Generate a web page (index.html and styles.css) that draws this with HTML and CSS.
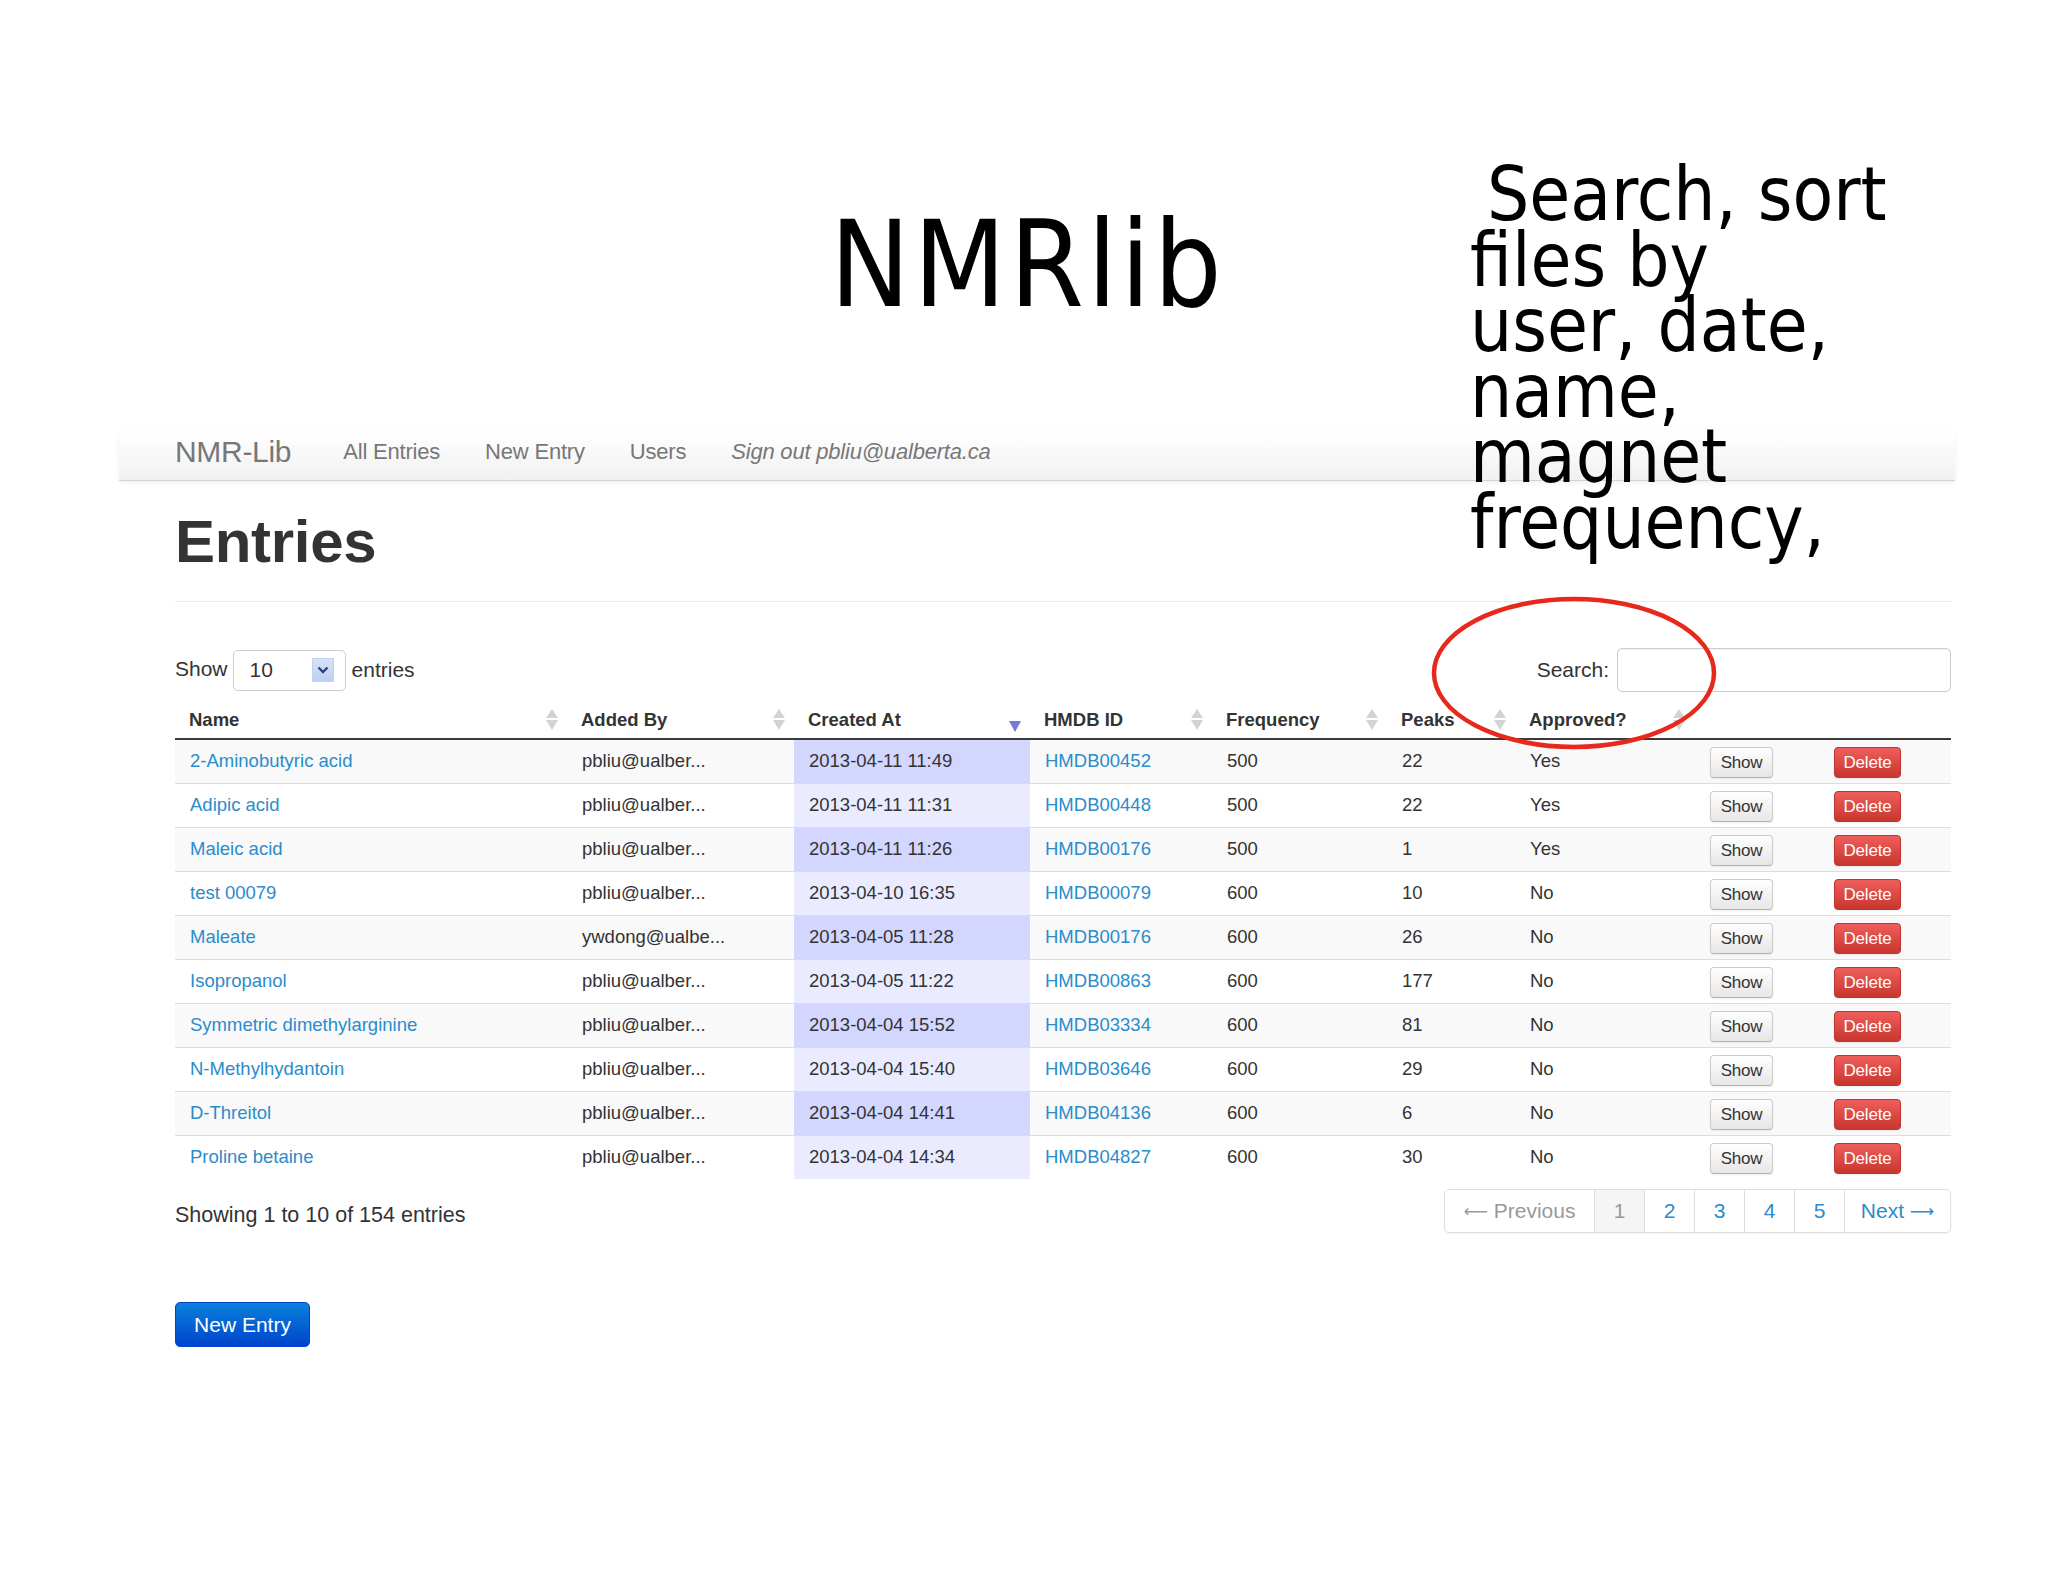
FILE: index.html
```html
<!DOCTYPE html>
<html lang="en">
<head>
<meta charset="utf-8">
<title>NMRlib</title>
<link rel="stylesheet" href="styles.css">
</head>
<body>
<div class="slide">
  <header class="slide-head">
    <h1 class="slide-title">NMRlib</h1>
  </header>

  <div class="note">
    <div class="note-first">Search, sort</div>
    <div>files by</div>
    <div>user, date,</div>
    <div>name,</div>
    <div>magnet</div>
    <div>frequency,</div>
  </div>

  <svg class="circle" width="300" height="170" viewBox="0 0 300 170">
    <ellipse cx="150" cy="85" rx="140" ry="74" fill="none" stroke="#e8281c" stroke-width="4.5"/>
  </svg>

  <nav class="navbar">
    <span class="brand">NMR-Lib</span>
    <span class="nav-link">All Entries</span>
    <span class="nav-link">New Entry</span>
    <span class="nav-link">Users</span>
    <span class="nav-link signout">Sign out pbliu@ualberta.ca</span>
  </nav>

  <main class="container">
    <h2 class="page-title">Entries</h2>
    <hr class="divider">

    <div class="controls">
      <div class="length">
        <span>Show</span>
        <span class="select">
          <span class="select-val">10</span>
          <span class="select-arrow">
            <svg width="12" height="8" viewBox="0 0 12 8"><path d="M1.5 1.5 L6 6 L10.5 1.5" fill="none" stroke="#2c3f7a" stroke-width="2.4"/></svg>
          </span>
        </span>
        <span>entries</span>
      </div>
      <div class="search">
        <span>Search:</span>
        <span class="search-input"></span>
      </div>
    </div>

    <table class="entries">
      <colgroup>
        <col class="c-name"><col class="c-added"><col class="c-created"><col class="c-hmdb"><col class="c-freq"><col class="c-peaks"><col class="c-appr"><col class="c-show"><col class="c-del">
      </colgroup>
      <thead>
        <tr>
          <th><span class="th-in">Name<i class="sort"></i></span></th>
          <th><span class="th-in">Added By<i class="sort"></i></span></th>
          <th><span class="th-in">Created At<i class="sort-desc"></i></span></th>
          <th><span class="th-in">HMDB ID<i class="sort"></i></span></th>
          <th><span class="th-in">Frequency<i class="sort"></i></span></th>
          <th><span class="th-in">Peaks<i class="sort"></i></span></th>
          <th><span class="th-in">Approved?<i class="sort"></i></span></th>
          <th></th>
          <th></th>
        </tr>
      </thead>
      <tbody>
        <tr><td><a>2-Aminobutyric acid</a></td><td>pbliu@ualber...</td><td class="hl">2013-04-11 11:49</td><td><a>HMDB00452</a></td><td>500</td><td>22</td><td>Yes</td><td class="btn-cell"><span class="btn">Show</span></td><td class="btn-cell del-cell"><span class="btn btn-danger">Delete</span></td></tr>
        <tr><td><a>Adipic acid</a></td><td>pbliu@ualber...</td><td class="hl">2013-04-11 11:31</td><td><a>HMDB00448</a></td><td>500</td><td>22</td><td>Yes</td><td class="btn-cell"><span class="btn">Show</span></td><td class="btn-cell del-cell"><span class="btn btn-danger">Delete</span></td></tr>
        <tr><td><a>Maleic acid</a></td><td>pbliu@ualber...</td><td class="hl">2013-04-11 11:26</td><td><a>HMDB00176</a></td><td>500</td><td>1</td><td>Yes</td><td class="btn-cell"><span class="btn">Show</span></td><td class="btn-cell del-cell"><span class="btn btn-danger">Delete</span></td></tr>
        <tr><td><a>test 00079</a></td><td>pbliu@ualber...</td><td class="hl">2013-04-10 16:35</td><td><a>HMDB00079</a></td><td>600</td><td>10</td><td>No</td><td class="btn-cell"><span class="btn">Show</span></td><td class="btn-cell del-cell"><span class="btn btn-danger">Delete</span></td></tr>
        <tr><td><a>Maleate</a></td><td>ywdong@ualbe...</td><td class="hl">2013-04-05 11:28</td><td><a>HMDB00176</a></td><td>600</td><td>26</td><td>No</td><td class="btn-cell"><span class="btn">Show</span></td><td class="btn-cell del-cell"><span class="btn btn-danger">Delete</span></td></tr>
        <tr><td><a>Isopropanol</a></td><td>pbliu@ualber...</td><td class="hl">2013-04-05 11:22</td><td><a>HMDB00863</a></td><td>600</td><td>177</td><td>No</td><td class="btn-cell"><span class="btn">Show</span></td><td class="btn-cell del-cell"><span class="btn btn-danger">Delete</span></td></tr>
        <tr><td><a>Symmetric dimethylarginine</a></td><td>pbliu@ualber...</td><td class="hl">2013-04-04 15:52</td><td><a>HMDB03334</a></td><td>600</td><td>81</td><td>No</td><td class="btn-cell"><span class="btn">Show</span></td><td class="btn-cell del-cell"><span class="btn btn-danger">Delete</span></td></tr>
        <tr><td><a>N-Methylhydantoin</a></td><td>pbliu@ualber...</td><td class="hl">2013-04-04 15:40</td><td><a>HMDB03646</a></td><td>600</td><td>29</td><td>No</td><td class="btn-cell"><span class="btn">Show</span></td><td class="btn-cell del-cell"><span class="btn btn-danger">Delete</span></td></tr>
        <tr><td><a>D-Threitol</a></td><td>pbliu@ualber...</td><td class="hl">2013-04-04 14:41</td><td><a>HMDB04136</a></td><td>600</td><td>6</td><td>No</td><td class="btn-cell"><span class="btn">Show</span></td><td class="btn-cell del-cell"><span class="btn btn-danger">Delete</span></td></tr>
        <tr><td><a>Proline betaine</a></td><td>pbliu@ualber...</td><td class="hl">2013-04-04 14:34</td><td><a>HMDB04827</a></td><td>600</td><td>30</td><td>No</td><td class="btn-cell"><span class="btn">Show</span></td><td class="btn-cell del-cell"><span class="btn btn-danger">Delete</span></td></tr>
      </tbody>
    </table>

    <div class="table-foot">
      <div class="info">Showing 1 to 10 of 154 entries</div>
      <ul class="pager">
        <li class="disabled"><span class="arrow">&#x27F5;</span>&nbsp;Previous</li>
        <li class="active">1</li>
        <li>2</li>
        <li>3</li>
        <li>4</li>
        <li>5</li>
        <li class="next">Next&nbsp;<span class="arrow">&#x27F6;</span></li>
      </ul>
    </div>

    <div class="actions">
      <span class="btn-primary">New Entry</span>
    </div>
  </main>
</div>
</body>
</html>
```

FILE: styles.css
```css
html, body {
  margin: 0;
  padding: 0;
  background: #ffffff;
}

.slide {
  position: relative;
  width: 2048px;
  height: 1582px;
  overflow: hidden;
  font-family: "Liberation Sans", Arial, sans-serif;
  color: #333333;
}

.slide-head {
  height: 431px;
  box-sizing: border-box;
  padding-left: 830px;
  padding-top: 206px;
}

.slide-title {
  margin: 0;
  font-family: "DejaVu Sans Condensed", "DejaVu Sans", sans-serif;
  font-weight: normal;
  font-size: 119px;
  line-height: 1;
  color: #000000;
  letter-spacing: 3.5px;
}

.note {
  position: absolute;
  left: 1470px;
  top: 162px;
  z-index: 3;
  font-family: "DejaVu Sans Condensed", "DejaVu Sans", sans-serif;
  font-size: 74px;
  line-height: 65.5px;
  color: #000000;
  white-space: nowrap;
}

.note-first {
  padding-left: 17px;
}

.circle {
  position: absolute;
  left: 1424px;
  top: 588px;
  z-index: 4;
}

.navbar {
  margin-left: 119px;
  width: 1836px;
  height: 50px;
  box-sizing: border-box;
  padding-left: 56px;
  display: flex;
  align-items: center;
  background: linear-gradient(#ffffff, #f1f1f1);
  border-bottom: 1px solid #d4d4d4;
  box-shadow: 0 2px 6px rgba(0, 0, 0, 0.06);
  color: #777777;
}

.brand {
  font-size: 30px;
  margin-right: 52px;
  margin-top: -8px;
  letter-spacing: -0.3px;
}

.nav-link {
  font-size: 22px;
  margin-right: 45px;
  margin-top: -7px;
  letter-spacing: -0.2px;
}

.signout {
  font-style: italic;
}

.container {
  width: 1776px;
  margin-left: 175px;
}

.page-title {
  margin: 29px 0 0 0;
  font-size: 60px;
  line-height: 64px;
  font-weight: bold;
  color: #333333;
  letter-spacing: -0.3px;
}

.divider {
  margin: 27px 0 0 0;
  border: 0;
  border-top: 1px solid #eaeaea;
  height: 0;
}

.controls {
  margin-top: 46px;
  display: flex;
  justify-content: space-between;
  align-items: center;
  font-size: 21px;
  height: 44px;
}

.length {
  display: flex;
  align-items: center;
  gap: 6px;
}

.length > span:first-child {
  margin-top: -2px;
}

.select {
  width: 113px;
  height: 41px;
  box-sizing: border-box;
  border: 1px solid #cccccc;
  border-radius: 5px;
  display: flex;
  align-items: center;
  padding-left: 16px;
  background: #ffffff;
  margin-left: -1px;
}

.select-val {
  flex: 1;
}

.select-arrow {
  width: 22px;
  height: 24px;
  margin-right: 11px;
  background: linear-gradient(#d6e2f7, #bcd0f1);
  border: 1px solid #c2d1ee;
  box-sizing: border-box;
  display: flex;
  align-items: center;
  justify-content: center;
}

.search {
  display: flex;
  align-items: center;
  gap: 8px;
}

.search-input {
  width: 334px;
  height: 44px;
  box-sizing: border-box;
  border: 1px solid #cccccc;
  border-radius: 5px;
  background: #ffffff;
  box-shadow: inset 0 1px 2px rgba(0, 0, 0, 0.06);
}

.entries {
  margin-top: 8px;
  width: 1776px;
  table-layout: fixed;
  border-collapse: collapse;
  border-spacing: 0;
  font-size: 18.5px;
}

.c-name { width: 392px; }
.c-added { width: 227px; }
.c-created { width: 236px; }
.c-hmdb { width: 182px; }
.c-freq { width: 175px; }
.c-peaks { width: 128px; }
.c-appr { width: 179px; }
.c-show { width: 127px; }
.c-del { width: 130px; }

.entries th {
  height: 39px;
  padding: 1px 0 0 14px;
  text-align: left;
  font-weight: bold;
  border-bottom: 2px solid #3a3a3a;
  box-sizing: border-box;
  vertical-align: middle;
}

.th-in {
  display: flex;
  align-items: center;
  justify-content: space-between;
  padding-right: 8px;
}

.sort, .sort-desc {
  display: inline-block;
  width: 13px;
  height: 23px;
  position: relative;
}

.sort::before {
  content: "";
  position: absolute;
  left: 0;
  top: 1px;
  border-left: 6px solid transparent;
  border-right: 6px solid transparent;
  border-bottom: 9px solid #d3d3d3;
}

.sort::after {
  content: "";
  position: absolute;
  left: 0;
  top: 12px;
  border-left: 6px solid transparent;
  border-right: 6px solid transparent;
  border-top: 10px solid #d3d3d3;
}

.sort-desc::after {
  content: "";
  position: absolute;
  left: 0;
  top: 13px;
  border-left: 6px solid transparent;
  border-right: 6px solid transparent;
  border-top: 11px solid #7777dd;
}

.entries td {
  height: 44px;
  box-sizing: border-box;
  padding: 0 6px 0 15px;
  vertical-align: middle;
  white-space: nowrap;
  overflow: hidden;
}

.entries tbody tr + tr td {
  border-top: 1px solid #dddddd;
}

.entries tbody tr:nth-child(odd) td {
  background: #f9f9f9;
}

.entries tbody tr:nth-child(odd) td.hl {
  background: #d3d6ff;
}

.entries tbody tr:nth-child(even) td.hl {
  background: #eaebff;
}

.entries a {
  color: #2a8ccc;
}

.entries td.btn-cell {
  padding: 3px 0 0 16px;
}

.entries td.del-cell {
  padding-left: 13px;
}

.btn {
  display: inline-block;
  box-sizing: border-box;
  height: 31px;
  line-height: 29px;
  padding: 0 8px;
  font-size: 17px;
  color: #333333;
  border: 1px solid #cccccc;
  border-bottom-color: #b3b3b3;
  border-radius: 4px;
  background: linear-gradient(#ffffff, #e6e6e6);
  box-shadow: 0 1px 2px rgba(0, 0, 0, 0.08);
  vertical-align: middle;
  width: 63px;
  text-align: center;
  letter-spacing: -0.2px;
}

.btn-danger {
  width: 67px;
  color: #ffffff;
  border-color: #bd362f;
  background: linear-gradient(#ee5f5b, #c9352f);
}

.table-foot {
  margin-top: 10px;
  display: flex;
  justify-content: space-between;
  align-items: center;
  height: 44px;
}

.info {
  font-size: 21.5px;
  margin-top: 8px;
}

.pager {
  list-style: none;
  margin: 0;
  padding: 0;
  display: flex;
  height: 44px;
  box-sizing: border-box;
  border: 1px solid #dddddd;
  border-radius: 5px;
  box-shadow: 0 1px 2px rgba(0, 0, 0, 0.05);
  font-size: 21px;
  overflow: hidden;
}

.pager li {
  width: 50px;
  display: flex;
  align-items: center;
  justify-content: center;
  border-left: 1px solid #dddddd;
  color: #2a8ccc;
  box-sizing: border-box;
  white-space: nowrap;
}

.pager .arrow {
  font-family: "DejaVu Sans", sans-serif;
  font-size: 17px;
}

.pager li.disabled {
  width: 149px;
  border-left: 0;
  color: #999999;
}

.pager li.active {
  background: #f5f5f5;
  color: #999999;
}

.pager li.next {
  width: 106px;
}

.actions {
  margin-top: 69px;
}

.btn-primary {
  display: inline-flex;
  align-items: center;
  justify-content: center;
  width: 135px;
  height: 45px;
  box-sizing: border-box;
  font-size: 21px;
  color: #ffffff;
  border-radius: 5px;
  border: 1px solid #0044cc;
  background: linear-gradient(#0a80dc, #0044cc);
}
```
